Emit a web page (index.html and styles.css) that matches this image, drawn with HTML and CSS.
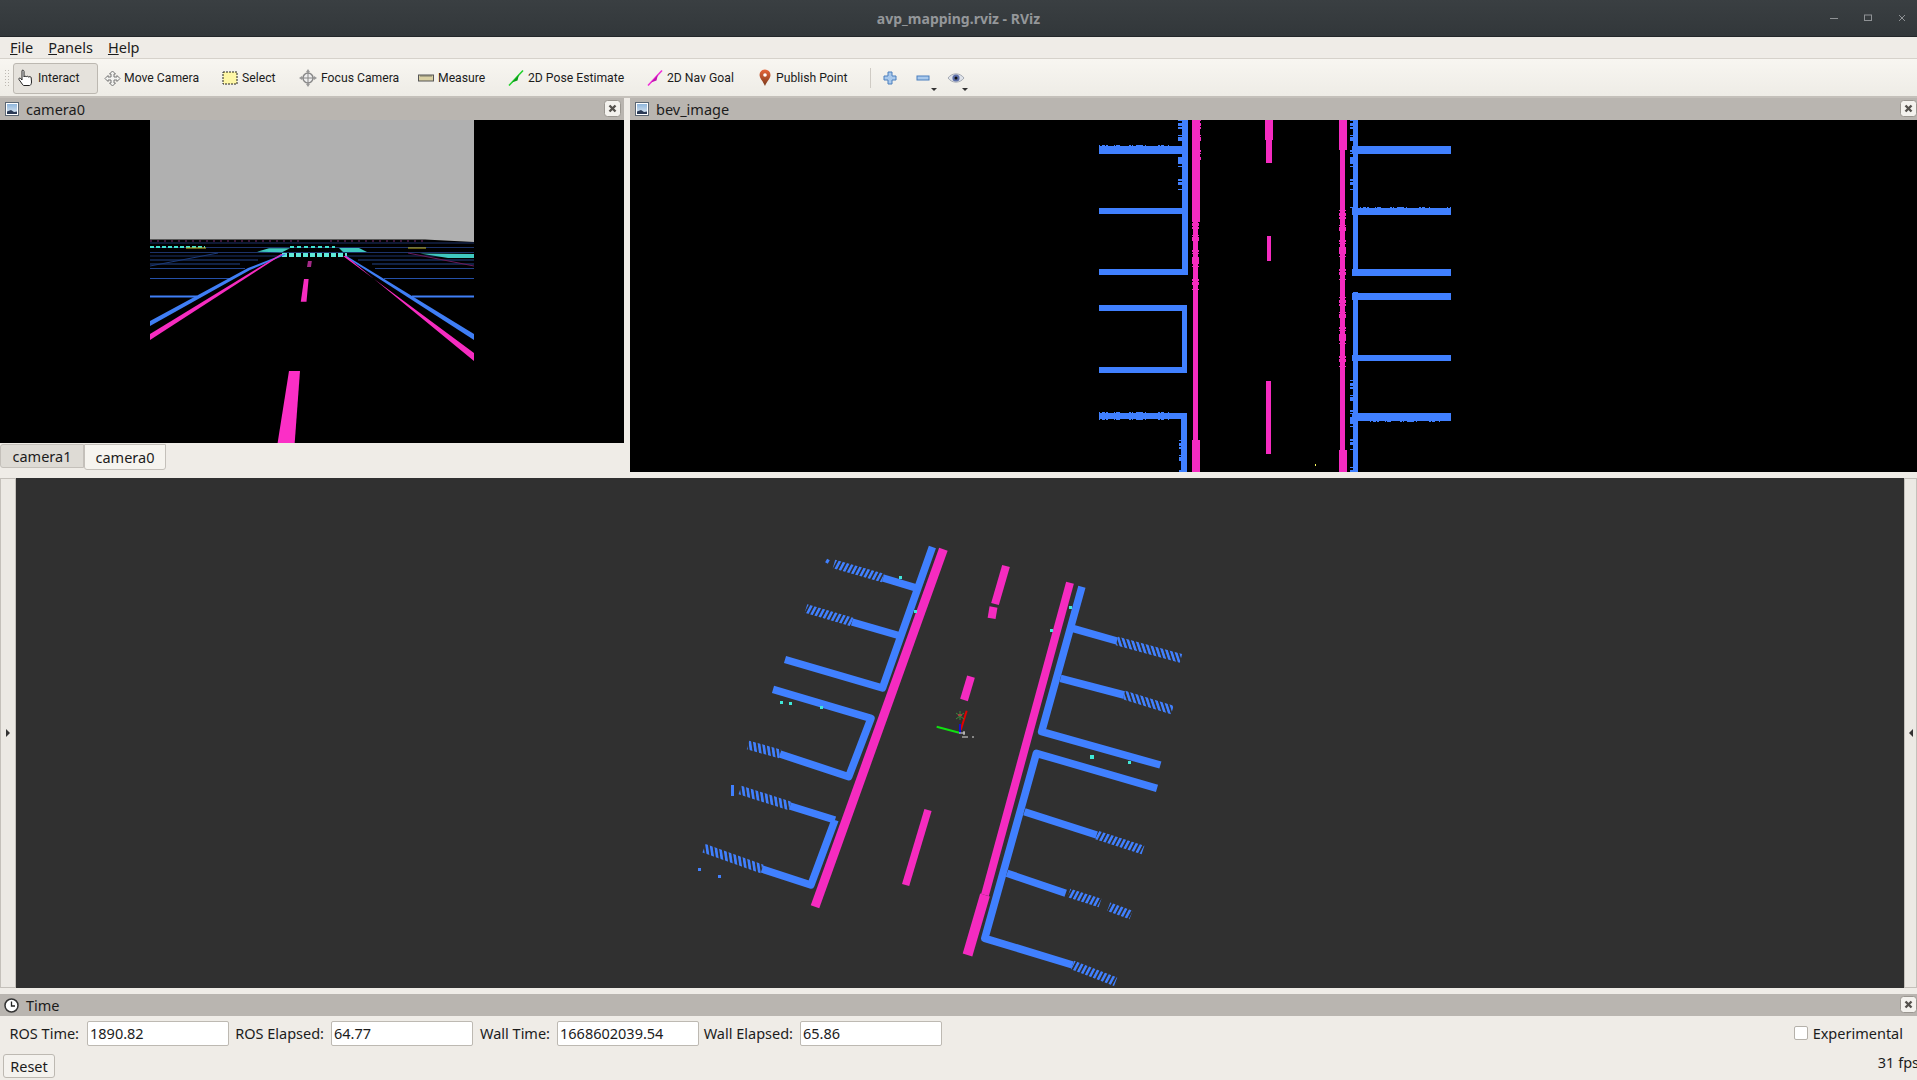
FILE: index.html
```html
<!DOCTYPE html>
<html lang="en">
<head>
  <meta charset="UTF-8" />
  <title>avp_mapping.rviz - RViz</title>
  <link rel="stylesheet" href="styles.css">
</head>
<body>
  <svg class="defs" width="0" height="0">
    <defs>
      <linearGradient id="sky" x1="0" y1="0" x2="0" y2="1">
        <stop offset="0" stop-color="#8fb6dc"/><stop offset="1" stop-color="#dfe9f2"/>
      </linearGradient>
      <linearGradient id="pin" x1="0" y1="0" x2="0" y2="1">
        <stop offset="0" stop-color="#e8663a"/><stop offset="1" stop-color="#7a3a1c"/>
      </linearGradient>
      <pattern id="ha" width="4.200" height="4" patternUnits="userSpaceOnUse" patternTransform="rotate(28)">
        <rect width="2.500" height="4" fill="#4080ff"/>
      </pattern>
      <pattern id="hb" width="4.400" height="4" patternUnits="userSpaceOnUse" patternTransform="rotate(-8)">
        <rect width="2.600" height="4" fill="#4080ff"/>
      </pattern>
      <pattern id="hc" width="4.200" height="4" patternUnits="userSpaceOnUse" patternTransform="rotate(-18)">
        <rect width="2.500" height="4" fill="#4080ff"/>
      </pattern>
      <g id="pic">
        <rect x="0.5" y="0.5" width="13" height="13" fill="#fff" stroke="#5b6672"/>
        <rect x="2" y="2" width="10" height="10" fill="url(#sky)"/>
        <path d="M2 12V9.5L6 8l3 2 3-.5V12z" fill="#2b3a55"/>
      </g>
      <g id="x">
        <rect x="0.5" y="0.5" width="16" height="16" rx="3" fill="#f4f2ee" stroke="#9b9791"/>
        <path d="M5.5 5.5l6 6M11.5 5.5l-6 6" stroke="#55524e" stroke-width="2.4"/>
      </g>
    </defs>
  </svg>

  <!-- Window title -->
  <div class="titlebar">
    <span class="title">avp_mapping.rviz - RViz</span>
    <div class="winbtns">
      <svg width="8" height="8"><path d="M0 4.5h8" stroke="#8f9295"/></svg>
      <svg width="8" height="8"><rect x="0.5" y="1" width="7" height="5.5" fill="none" stroke="#8f9295"/></svg>
      <svg width="8" height="8"><path d="M1 1l6 6M7 1L1 7" stroke="#8f9295"/></svg>
    </div>
  </div>

  <div class="menubar">
    <span><u>F</u>ile</span>
    <span><u>P</u>anels</span>
    <span><u>H</u>elp</span>
  </div>

  <!-- Tools -->
  <div class="toolbar">
    <div class="grip"></div>
    <div class="tool active w-interact">
      <svg width="17" height="18" viewBox="0 0 17 18"><path d="M4 1.5c1-.8 2 0 2 1V8c0-1 2-1.200 2.300 0 0-1 2.200-1 2.400.2 .2-.8 2.300-.8 2.500.5l.3 4.300c0 2-1 3.500-2 3.500H6c-1 0-1.500-1-2.500-2.500L1 10.500c-.6-1 .7-2 1.500-1.200L4 11z" fill="#fff" stroke="#222" stroke-width="1"/></svg>
      <span>Interact</span>
    </div>
    <div class="tool w-move">
      <svg width="17" height="17" viewBox="0 0 17 17"><path d="M8.500 1l3 3H10v3h3V5.500l3 3-3 3V10h-3v3h1.500l-3 3-3-3H7v-3H4v1.500l-3-3 3-3V7h3V4H5.500z" fill="#f3f3f0" stroke="#777"/></svg>
      <span>Move Camera</span>
    </div>
    <div class="tool w-select">
      <svg width="16" height="16" viewBox="0 0 16 16"><rect x="1" y="2" width="14" height="12" fill="#fdf6a6" stroke="#222" stroke-dasharray="2 1"/></svg>
      <span>Select</span>
    </div>
    <div class="tool w-focus">
      <svg width="18" height="18" viewBox="0 0 18 18"><circle cx="9" cy="9" r="5" fill="#eee" stroke="#888" stroke-width="1.500"/><path d="M9 0l2 3H7zM9 18l2-3H7zM0 9l3 2V7zM18 9l-3 2V7z" fill="#999"/><path d="M9 3v12M3 9h12" stroke="#888"/></svg>
      <span>Focus Camera</span>
    </div>
    <div class="tool w-measure">
      <svg width="16" height="16" viewBox="0 0 16 16"><rect x="0.500" y="5" width="15" height="6" fill="#d9d0a4" stroke="#555"/><path d="M3 5v2M5 5v2M7 5v2M9 5v2M11 5v2M13 5v2" stroke="#555" stroke-width="0.700"/></svg>
      <span>Measure</span>
    </div>
    <div class="tool w-pose">
      <svg width="16" height="16" viewBox="0 0 16 16"><path d="M1 15.500L15 .5" stroke="#1fd12a" stroke-width="1.500"/><path d="M4 12.500l7-8 -1.500 6z" fill="#0c9a1a"/></svg>
      <span>2D Pose Estimate</span>
    </div>
    <div class="tool w-goal">
      <svg width="16" height="16" viewBox="0 0 16 16"><path d="M1 15.500L15 .5" stroke="#f02cd8" stroke-width="1.500"/><path d="M4 12.500l7-8 -1.500 6z" fill="#c012b0"/></svg>
      <span>2D Nav Goal</span>
    </div>
    <div class="tool w-point">
      <svg width="14" height="18" viewBox="0 0 14 18"><path d="M7 17C5 12 1.500 9.500 1.500 6a5.500 5.500 0 0 1 11 0C12.500 9.500 9 12 7 17z" fill="url(#pin)"/><circle cx="7" cy="6" r="1.800" fill="#fff"/></svg>
      <span>Publish Point</span>
    </div>
    <div class="sep"></div>
    <div class="tool icon w-plus">
      <svg width="14" height="14" viewBox="0 0 14 14"><path d="M5 1h4v4h4v4H9v4H5V9H1V5h4z" fill="#a9c9ec" stroke="#4a7fbd"/></svg>
    </div>
    <div class="tool icon drop">
      <svg width="14" height="14" viewBox="0 0 14 14"><rect x="1" y="5" width="12" height="4" fill="#a9c9ec" stroke="#4a7fbd"/></svg>
      <i class="arrow"></i>
    </div>
    <div class="tool icon drop">
      <svg width="18" height="14" viewBox="0 0 18 14"><path d="M1 7c4-5.500 12-5.500 16 0-4 5.500-12 5.500-16 0z" fill="#dfe3ea" stroke="#a4a9b2"/><circle cx="9" cy="7" r="3.600" fill="#5d6fa8"/><circle cx="9" cy="7" r="1.500" fill="#111"/></svg>
      <i class="arrow"></i>
    </div>
  </div>

  <!-- Camera and BEV images -->
  <div class="upper">
    <div class="panel left">
      <div class="dockhead">
        <svg width="14" height="14"><use href="#pic"/></svg>
        <span>camera0</span>
        <svg class="close" width="17" height="17"><use href="#x"/></svg>
      </div>
      <svg class="view" width="624" height="323" viewBox="0 120 624 323">
        <rect x="0" y="120" width="624" height="323" fill="#000"/>
        <path d="M150 120H474V242L425 239.500H150z" fill="#b0b0b0"/>
        <g fill="none" stroke-width="1">
          <path d="M150 243H474M150 247.500H474M150 252.500H474M150 256H285M345 256H474" stroke="#1c3268"/>
          <path d="M150 260H258M358 260H474M150 264H240M372 264H474M150 268.500H245M375 268.500H474" stroke="#234488"/>
          <path d="M150 278.500H231M384 278.500H474" stroke="#2550a8"/>
          <path d="M150 296.500H197M412 296.500H474" stroke="#3f7ef5" stroke-width="2"/>
          <path d="M150 266L218 253" stroke="#1c3a78"/>
          <path d="M408 253L474 266" stroke="#6a1a5a"/>
          <path d="M150 241H300M330 241H425" stroke="#7a2a70" stroke-dasharray="2 5"/>
          <path d="M150 247H205" stroke="#40e0d0" stroke-width="2" stroke-dasharray="4 2"/>
          <path d="M290 247H335" stroke="#40e0d0" stroke-width="2" stroke-dasharray="4 3"/>
          <path d="M282 255H347" stroke="#5ee8d8" stroke-width="4" stroke-dasharray="5 2"/>
          <path d="M186 248H206M408 248H426" stroke="#c8b820"/>
        </g>
        <path d="M257 251.700L269 248.300H290L282 252.300zM339 248H359L367 252H343zM420 253.500L474 254V258H448z" fill="#3fc8c0"/>
        <path d="M150 321V326L250 270L286 254.500L284 254L248 268z" fill="#3f7ef5"/>
        <path d="M150 334V340L283 254H281z" fill="#f62cc0"/>
        <path d="M474 334V340L347 258L345 255z" fill="#3f7ef5"/>
        <path d="M474 353V361L346 256H343z" fill="#f62cc0"/>
        <path d="M289 371H300L294.700 443H277.600z" fill="#fb2fc6"/>
        <path d="M304 279H308.600L306.500 301.700H300.800z" fill="#f62cc0"/>
        <path d="M308 261H311.800L311 267H307z" fill="#a42a88"/>
      </svg>
      <div class="tabs">
        <div class="tab">camera1</div>
        <div class="tab current">camera0</div>
      </div>
    </div>

    <div class="panel right">
      <div class="dockhead">
        <svg width="14" height="14"><use href="#pic"/></svg>
        <span>bev_image</span>
        <svg class="close" width="17" height="17"><use href="#x"/></svg>
      </div>
      <svg class="view" width="1287" height="352" viewBox="630 120 1287 352" shape-rendering="crispEdges">
        <rect x="630" y="120" width="1287" height="352" fill="#000"/>
        <g class="blue">
          <path d="M1099 149.500H1188" stroke-width="8"/>
          <path d="M1099 210.500H1183" stroke-width="6"/>
          <path d="M1099 271.500H1187" stroke-width="6"/>
          <path d="M1099 308H1187" stroke-width="6"/>
          <path d="M1099 369.500H1187" stroke-width="6"/>
          <path d="M1099 416H1187" stroke-width="6"/>
          <path d="M1184.500 120V275" stroke-width="6"/>
          <path d="M1184.500 305V373" stroke-width="5"/>
          <path d="M1184 414V472" stroke-width="6"/>
          <path d="M1355 120V272" stroke-width="5"/>
          <path d="M1355 292V472" stroke-width="5"/>
          <path d="M1352 149.500H1451" stroke-width="8"/>
          <path d="M1352 211H1451" stroke-width="7"/>
          <path d="M1352 272H1451" stroke-width="7"/>
          <path d="M1352 296H1451" stroke-width="7"/>
          <path d="M1352 357.500H1451" stroke-width="6"/>
          <path d="M1352 417H1451" stroke-width="8"/>
        </g>
        <g class="blue rough">
          <path d="M1182 120V200" stroke-width="8"/>
          <path d="M1354 120V210" stroke-width="8"/>
          <path d="M1354 380V472" stroke-width="8"/>
          <path d="M1183 440V472" stroke-width="8"/>
          <path d="M1099 149.500H1180" stroke-width="9"/>
          <path d="M1099 416H1170" stroke-width="8"/>
          <path d="M1360 211H1451" stroke-width="8"/>
          <path d="M1370 417H1451" stroke-width="9"/>
        </g>
        <g class="pink">
          <path d="M1196 120V222" stroke-width="8"/>
          <path d="M1195.500 222V440" stroke-width="5"/>
          <path d="M1196 440V472" stroke-width="8"/>
          <path d="M1269 120V140" stroke-width="8"/>
          <path d="M1269 140V163" stroke-width="6"/>
          <path d="M1269 236V261" stroke-width="4"/>
          <path d="M1268.500 381V454" stroke-width="5"/>
          <path d="M1342.500 120V150" stroke-width="8"/>
          <path d="M1342 150V472" stroke-width="5"/>
          <path d="M1342.500 450V472" stroke-width="8"/>
        </g>
        <g class="pink rough">
          <path d="M1195.500 220V300" stroke-width="7"/>
          <path d="M1342 210V380" stroke-width="7"/>
          <path d="M1196 120V160" stroke-width="9"/>
        </g>
        <rect x="1315" y="464" width="1" height="2" fill="#ffff60"/>
      </svg>
    </div>
  </div>

  <!-- 3D view -->
  <div class="middle">
    <div class="side"><i class="tri tri-r"></i></div>
    <svg class="scene" width="1888" height="510" viewBox="16 478 1888 510">
      <rect x="16" y="478" width="1888" height="510" fill="#303030"/>
      <g class="blue lines" stroke-width="7.500">
        <path d="M932.400 547L882.500 688L785 659.500"/>
        <path d="M917.600 588.300L883 578"/>
        <path d="M900.400 636L852 622"/>
        <path d="M773 689.300L871 718.300L848.700 776.700L780 754"/>
        <path d="M835 820L790 806M835 820L810.900 885L762 869"/>
        <path d="M1081.900 586.700L1041.600 731.700L1160.400 765"/>
        <path d="M1157 788.300L1036.400 753.300L984.800 938.300L1072.600 965"/>
        <path d="M1072.600 628.300L1117 641"/>
        <path d="M1060.500 678.300L1124 695"/>
        <path d="M1024.400 811.700L1096.700 835"/>
        <path d="M1007 873.300L1065.700 893.300"/>
      </g>
      <g class="lines" stroke="url(#ha)" stroke-width="9">
        <path d="M883 578L834 564"/>
        <path d="M852 622L806 608.500"/>
        <path d="M1072.600 965L1115.600 981.700"/>
        <path d="M1096.700 835L1143 850"/>
        <path d="M1069 893L1100 903"/>
        <path d="M1108.700 906.700L1131 915"/>
      </g>
      <g class="lines" stroke="url(#hb)" stroke-width="9">
        <path d="M780 754L748 745"/>
        <path d="M790 806L740 790"/>
        <path d="M762 869L704 848.300"/>
      </g>
      <g class="lines" stroke="url(#hc)" stroke-width="9">
        <path d="M1117 641L1181 658.300"/>
        <path d="M1124 695L1172.400 710"/>
      </g>
      <rect x="826" y="559" width="3" height="4" fill="#4080ff" transform="rotate(30 827 561)"/>
      <rect x="731" y="785" width="3" height="11" fill="#4080ff"/>
      <rect x="698" y="868" width="3" height="3" fill="#4080ff"/>
      <rect x="718" y="875" width="3" height="3" fill="#4080ff"/>
      <g class="pink lines">
        <path d="M943.400 549.300L815 906.700" stroke-width="9"/>
        <path d="M1006 566L995 604" stroke-width="8"/>
        <path d="M993.500 607L991.600 618.300" stroke-width="8"/>
        <path d="M971 676.700L964 700" stroke-width="8"/>
        <path d="M928 810L905.600 885" stroke-width="7.500"/>
        <path d="M1070 582.700L985 895" stroke-width="8"/>
        <path d="M985 895L967.500 955" stroke-width="10"/>
      </g>
      <g fill="#40e8d8">
        <rect x="780" y="701" width="3" height="3"/>
        <rect x="789" y="702" width="3" height="3"/>
        <rect x="820" y="706" width="3" height="3"/>
        <rect x="1090" y="755" width="4" height="4"/>
        <rect x="1128" y="761" width="3" height="3"/>
        <rect x="899" y="576" width="3" height="3"/>
        <rect x="914" y="610" width="3" height="3"/>
        <rect x="1069" y="606" width="3" height="3"/>
        <rect x="1050" y="629" width="3" height="3"/>
      </g>
      <g class="lines">
        <path d="M966.700 710.700L960.700 730" stroke="#e00000" stroke-width="2"/>
        <path d="M936.700 726.700L959.300 732.700" stroke="#10e010" stroke-width="2"/>
        <path d="M960 724V733.500" stroke="#1010d0" stroke-width="2"/>
        <path d="M956 713l8 6M964 713l-8 6M960 711v9" stroke="#3a8a3a" stroke-width="1"/>
        <path d="M958 715h4" stroke="#a04040" stroke-width="2"/>
        <path d="M959 733h6M964 731v4" stroke="#ddd" stroke-width="1"/>
        <path d="M962 737h6M972 737h2" stroke="#ddd" stroke-width="1"/>
      </g>
    </svg>
    <div class="side side-r"><i class="tri tri-l"></i></div>
  </div>

  <!-- Time panel -->
  <div class="timehead">
    <svg width="15" height="15" viewBox="0 0 15 15"><circle cx="7.500" cy="7.500" r="6.500" fill="#fff" stroke="#333" stroke-width="1.500"/><path d="M7.500 3.500v4.500H11" fill="none" stroke="#222" stroke-width="1.300"/></svg>
    <span>Time</span>
    <svg class="close" width="17" height="17"><use href="#x"/></svg>
  </div>
  <div class="timerow">
    <label class="l1">ROS Time:</label><div class="field">1890.82</div>
    <label class="l2">ROS Elapsed:</label><div class="field">64.77</div>
    <label class="l3">Wall Time:</label><div class="field">1668602039.54</div>
    <label class="l4">Wall Elapsed:</label><div class="field">65.86</div>
    <div class="exp"><span class="check"></span><span>Experimental</span></div>
  </div>
  <div class="bottomrow">
    <div class="reset">Reset</div>
    <div class="fps">31 fps</div>
  </div>
</body>
</html>
```

FILE: styles.css
```css
* {
  box-sizing: border-box;
}

html, body {
  margin: 0;
  padding: 0;
}

body {
  width: 1917px;
  height: 1080px;
  overflow: hidden;
  background-color: #efece7;
  font-family: "Noto Sans", sans-serif;
  font-size: 14px;
  color: #1c1c1c;
  display: flex;
  flex-direction: column;
}

svg {
  display: block;
  flex: none;
}

.defs {
  position: absolute;
}

/* window title */
.titlebar {
  height: 37px;
  flex: none;
  background: linear-gradient(#3a3f42, #32373a);
  border-bottom: 1px solid #23272a;
  position: relative;
  display: flex;
  align-items: center;
  justify-content: center;
}

.title {
  color: #94979a;
  font-weight: bold;
  font-size: 14px;
}

.winbtns {
  position: absolute;
  right: 11px;
  top: 14px;
  display: flex;
  gap: 26px;
}

/* menu */
.menubar {
  height: 22px;
  flex: none;
  display: flex;
  align-items: center;
  gap: 15px;
  padding: 0 0 2px 10px;
  border-bottom: 1px solid #d6d2cb;
  font-size: 14.5px;
}

/* toolbar */
.toolbar {
  height: 39px;
  flex: none;
  display: flex;
  align-items: center;
  padding: 1px 0 0 4px;
  background: linear-gradient(#f8f6f1, #eeece6);
  border-bottom: 2px solid #c4c0ba;
  font-family: Roboto, sans-serif;
  font-size: 12.2px;
}

.grip {
  width: 9px;
  height: 18px;
  background-image: radial-gradient(#bdb9b2 0.7px, transparent 1px);
  background-size: 3px 3px;
  background-repeat: repeat;
  border-right: 3px solid transparent;
  background-clip: padding-box;
}

.tool {
  height: 31px;
  display: flex;
  align-items: center;
  gap: 4px;
  padding-left: 5px;
  position: relative;
}

.tool.active {
  background-color: #e5e2dc;
  border: 1px solid #bcb8b1;
  border-radius: 3px;
  padding-left: 4px;
}

.w-interact { width: 85px; margin-right: 1px; gap: 3px; }
.w-move { width: 118px; gap: 3px; }
.w-select { width: 77px; }
.w-focus { width: 119px; }
.w-measure { width: 90px; }
.w-pose { width: 139px; }
.w-goal { width: 111px; }
.w-point { width: 117px; }

.sep {
  width: 1px;
  height: 20px;
  background-color: #cfcbc4;
  margin-right: 7px;
}

.tool.icon {
  width: 31px;
  padding-left: 5px;
}

.tool.w-plus {
  width: 33px;
}

.arrow {
  position: absolute;
  left: 20px;
  bottom: 3px;
  border-left: 3px solid transparent;
  border-right: 3px solid transparent;
  border-top: 3px solid #333;
}

/* image panels */
.upper {
  height: 380px;
  flex: none;
  display: flex;
  gap: 6px;
}

.panel.left {
  width: 624px;
}

.panel.right {
  width: 1287px;
}

.dockhead {
  height: 22px;
  background-color: #b9b5b0;
  display: flex;
  align-items: center;
  gap: 7px;
  padding-left: 5px;
  position: relative;
  font-size: 14.5px;
}

.close {
  position: absolute;
  right: 3px;
  top: 2px;
}

.panel.right .close {
  right: 0;
}

.tabs {
  display: flex;
  height: 27px;
  padding-top: 1px;
  align-items: flex-start;
  border-top: 1px solid #d0ccc5;
  margin-top: -1px;
  font-size: 14.5px;
}

.tab {
  width: 84px;
  height: 24px;
  background-color: #dedbd5;
  border: 1px solid #c4c0ba;
  border-radius: 3px 0 0 3px;
  text-align: center;
  line-height: 22px;
}

.tab.current {
  width: 82px;
  height: 26px;
  background-color: #f6f4ef;
  border-radius: 0 0 3px 3px;
  line-height: 25px;
}

.blue path {
  stroke: #4080ff;
  fill: none;
}

.pink path {
  stroke: #f52bc0;
  fill: none;
}

.rough path {
  stroke-dasharray: 1 2 3 1 2 6 1 1 4 9 2 1 1 3 7 2 1 12 2 1 3 4 1 17;
}

/* 3D view */
.middle {
  height: 510px;
  flex: none;
  display: flex;
  align-items: stretch;
}

.side {
  width: 16px;
  background-color: #ece9e4;
  border: 1px solid #c4c0ba;
  display: flex;
  align-items: center;
  justify-content: center;
}

.side-r {
  width: 13px;
}

.tri {
  border-top: 4px solid transparent;
  border-bottom: 4px solid transparent;
}

.tri-r {
  border-left: 4px solid #333;
}

.tri-l {
  border-right: 4px solid #333;
}

.lines path {
  fill: none;
  stroke-linejoin: round;
}

/* time panel */
.timehead {
  height: 22px;
  flex: none;
  margin-top: 6px;
  background-color: #b9b5b0;
  display: flex;
  align-items: center;
  gap: 7px;
  padding-left: 4px;
  position: relative;
  font-size: 14.5px;
}

.timehead .close {
  right: 0;
  top: 2px;
}

.timerow {
  height: 34px;
  flex: none;
  display: flex;
  align-items: center;
  font-size: 14.5px;
}

.timerow label {
  text-align: right;
}

.l1 { width: 79px; margin-right: 8px; }
.l2 { width: 95px; margin-right: 7px; }
.l3 { width: 77px; margin-right: 7px; }
.l4 { width: 94px; margin-right: 7px; }

.field {
  width: 142px;
  height: 25px;
  background-color: #fff;
  border: 1px solid #bdb9b2;
  border-radius: 2px;
  padding-left: 2px;
  line-height: 23px;
}

.exp {
  margin-left: auto;
  padding-right: 14px;
  display: flex;
  align-items: center;
  gap: 5px;
}

.check {
  width: 14px;
  height: 14px;
  background-color: #fff;
  border: 1px solid #b5b1aa;
  border-radius: 2px;
}

.bottomrow {
  flex: 1;
  display: flex;
  justify-content: space-between;
  align-items: flex-start;
  padding-left: 3px;
  font-size: 14.5px;
}

.reset {
  width: 52px;
  height: 24px;
  margin-top: 4px;
  background-color: #f4f2ee;
  border: 1px solid #bdb9b2;
  border-radius: 3px;
  text-align: center;
  line-height: 22px;
}

.fps {
  margin-right: -2px;
  margin-top: 2px;
}
```
